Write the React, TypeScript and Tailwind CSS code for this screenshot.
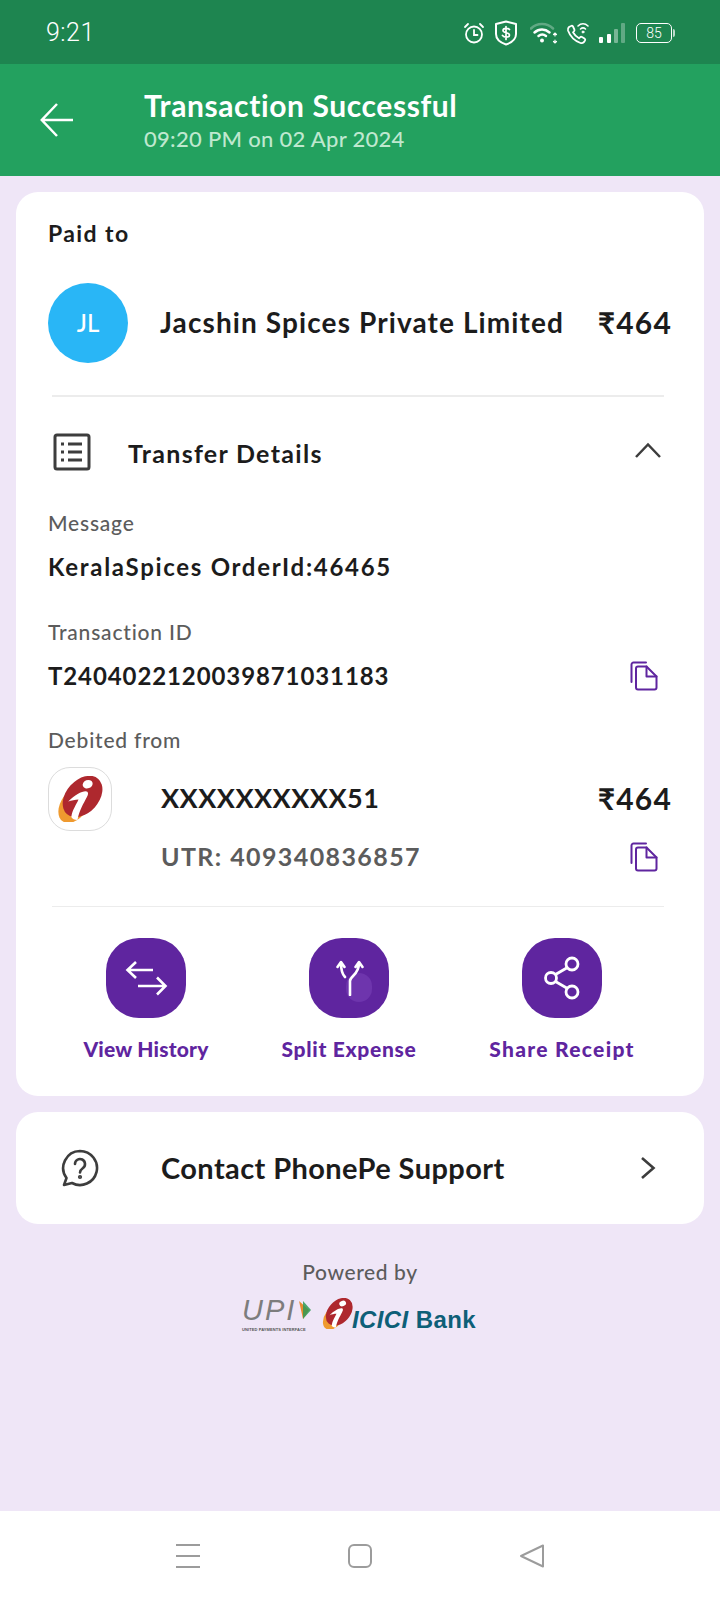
import React from "react";

const font = "font-['Lato','Open_Sans',sans-serif]";

function CopyIcon() {
  return (
    <svg width="28" height="30" viewBox="0 0 28 30" fill="none" stroke="#5f259f" strokeWidth="2" strokeLinejoin="round" strokeLinecap="round">
      <path d="M1.500 21V3.500a2 2 0 0 1 2-2H16" />
      <path d="M6 7.500a2 2 0 0 1 2-2h8.500l10 10V26.500a2 2 0 0 1-2 2H8a2 2 0 0 1-2-2z" fill="#fff" />
      <path d="M16.500 5.500v10h10" />
    </svg>
  );
}

function IciciMark({ size }: { size: number }) {
  return (
    <svg width={size} height={size} viewBox="0 0 45 45">
      <ellipse cx="17" cy="28" rx="20" ry="13" transform="rotate(-55 17 28)" fill="#ef9a2f" />
      <ellipse cx="25" cy="20" rx="23" ry="16" transform="rotate(-48 25 20)" fill="#ae282e" />
      <ellipse cx="30" cy="8" rx="5" ry="4" transform="rotate(-20 30 8)" fill="#fff" />
      <path d="M11 25C17 19 24 15 28 15c3 0 3 3 1 6-3 6-7 12-9 22-3 0-5-1-6-3 1-7 5-12 7-17-3 0-7 1-10 2z" fill="#fff" />
    </svg>
  );
}

function Field({ label, value, copy, className }: { label: string; value: string; copy?: boolean; className: string }) {
  return (
    <>
      <div className={`flex h-[24px] items-center text-[21px] font-medium tracking-[0.8px] text-[#5c5c5c] ${className}`}>{label}</div>
      <div className="mt-[16px] flex h-[32px] items-center justify-between pr-[12px] text-[24px] font-bold tracking-[0.9px] text-[#1c1c1c]">
        <span className={copy ? "" : "tracking-[1.700px]"}>{value}</span>
        {copy && <CopyIcon />}
      </div>
    </>
  );
}

function Action({ label, className, labelClass, children }: { label: string; className: string; labelClass: string; children: React.ReactNode }) {
  return (
    <div className={`flex w-[160px] flex-col items-center ${className}`}>
      <div className="relative flex h-[80px] w-[80px] items-center justify-center overflow-hidden rounded-[33px] bg-[#5f259f]">{children}</div>
      <div className={`mt-[17px] flex h-[28px] items-center whitespace-nowrap text-[21px] font-black text-[#5f259f] ${labelClass}`}>{label}</div>
    </div>
  );
}

export default function App() {
  return (
    <div className={`flex min-h-[1600px] w-[720px] flex-col bg-[#efe6f7] ${font}`}>
      <div className="flex h-[64px] items-center bg-[#1e8550] pl-[46px] pr-[45px] pt-[2px] text-white">
        <span className="font-['Roboto',sans-serif] text-[25px] font-light tracking-[0.5px]">9:21</span>
        <div className="ml-auto flex items-center">
          <svg width="22" height="22" viewBox="0 0 22 22" fill="none" stroke="#fff" strokeWidth="1.800" strokeLinecap="round">
            <circle cx="11" cy="12.500" r="8" />
            <path d="M11 8v5h3.500M2 5l3-3M20 5l-3-3" />
          </svg>
          <svg className="ml-[9px]" width="24" height="26" viewBox="0 0 24 26" fill="none" stroke="#fff" strokeWidth="2">
            <path d="M12 1.500 22 4v10c0 5-4 8.500-10 10.500C6 22.500 2 19 2 14V4z" strokeLinejoin="round" />
            <path d="M15.500 9.500c-1-1.500-6.500-2-6.500 1 0 3 6.500 1.500 6.500 4.500 0 3-5.500 2.500-7 .5M12 6.500v13" strokeWidth="1.700" strokeLinecap="round" />
          </svg>
          <svg className="ml-[12px]" width="28" height="24" viewBox="0 0 28 24" fill="none" strokeLinecap="round">
            <path d="M1 7.500c6-6 16-6 22 0" stroke="#fff" strokeOpacity=".3" strokeWidth="2.500" />
            <path d="M4.500 11.500c4.500-4 10.500-4 15 0M8.500 15c2.500-2 5-2 7.500 0" stroke="#fff" strokeWidth="2.500" />
            <circle cx="12" cy="19.500" r="2" fill="#fff" />
            <path d="M25 13v2M23.500 13.500l1.500-1.500 1.500 1.500M25 19v2M23.500 20.500l1.500 1.500 1.500-1.500" stroke="#fff" strokeWidth="1.200" />
          </svg>
          <svg className="ml-[8px]" width="24" height="24" viewBox="0 0 24 24" fill="none" stroke="#fff" strokeLinecap="round" strokeLinejoin="round">
            <path d="M3 6c-1 1-1.500 2-1 3.500C4 15 9 20 14.500 22c1.500.5 2.500 0 3.500-1l1-1.500c.5-.8.3-1.500-.5-2L16 16c-.7-.4-1.400-.3-2 .3l-1 1c-2.500-1.300-4.500-3.300-6-6l1-1c.6-.6.7-1.300.3-2L7 5.500c-.5-.8-1.200-1-2-.5z" strokeWidth="1.800" />
            <path d="M12 5c3-3 7-3 10 0M14.500 8c1.700-1.500 3.300-1.500 5 0" strokeWidth="1.600" />
            <circle cx="17" cy="11" r="1" fill="#fff" />
          </svg>
          <svg className="ml-[8px]" width="28" height="22" viewBox="0 0 28 22" fill="#fff">
            <rect x="1" y="15" width="4" height="6" rx="1" />
            <rect x="9" y="12" width="4" height="9" rx="1" />
            <rect x="16" y="7" width="4" height="14" rx="1" fillOpacity=".4" />
            <rect x="23" y="1" width="4" height="20" rx="1" fillOpacity=".3" />
          </svg>
          <div className="ml-[10px] flex items-center">
            <div className="flex h-[20px] w-[36px] items-center justify-center rounded-[5px] border-[1.5px] border-white font-['Roboto',sans-serif] text-[14px] font-light leading-none">85</div>
            <div className="ml-px h-[8px] w-[2px] rounded-r-sm bg-white/70" />
          </div>
        </div>
      </div>

      <div className="flex h-[112px] items-center bg-[#23a15f] pl-[40px] text-white">
        <svg width="34" height="36" viewBox="0 0 34 36" fill="none" stroke="#fff" strokeWidth="2.500">
          <path d="M33 18H2M17 2 1.800 18 17 34" />
        </svg>
        <div className="ml-[70px] flex flex-col pt-[4px]">
          <div className="flex h-[34px] items-center text-[30px] font-bold leading-none tracking-[0.6px]">Transaction Successful</div>
          <div className="flex h-[34px] items-center text-[22px] font-medium leading-none tracking-[0.3px] text-[#bfe8cf]">09:20 PM on 02 Apr 2024</div>
        </div>
      </div>

      <div className="mx-[16px] mt-[16px] rounded-[22px] bg-white pb-[33px] pl-[32px] pr-[34px] pt-[27px]">
        <div className="flex h-[28px] items-center text-[23px] font-bold tracking-[1.400px] text-[#1c1c1c]">Paid to</div>
        <div className="mt-[36px] flex h-[80px] items-center">
          <div className="flex h-[80px] w-[80px] items-center justify-center rounded-full bg-[#29b6f6] text-[24px] font-medium text-white">JL</div>
          <span className="mb-[2px] ml-[32px] text-[28px] font-bold tracking-[1.100px] text-[#1c1c1c]">Jacshin Spices Private Limited</span>
          <span className="-mr-[2px] mb-[2px] ml-auto font-['Lato','Noto_Sans',sans-serif] text-[30px] font-bold tracking-[1.200px] text-[#1c1c1c]">₹464</span>
        </div>
        <div className="ml-[4px] mr-[6px] mt-[32px] h-[1.500px] bg-[#ececec]" />
        <div className="mt-[32px] flex h-[46px] items-center">
          <svg className="ml-[5px]" width="38" height="38" viewBox="0 0 38 38" fill="none" stroke="#3d3d3d" strokeWidth="3">
            <rect x="2" y="2" width="34" height="34" rx="2" />
            <path d="M15 11h14M15 19h14M15 27h14M8 11h3M8 19h3M8 27h3" />
          </svg>
          <span className="ml-[37px] pt-[4px] text-[25px] font-bold tracking-[1.300px] text-[#1c1c1c]">Transfer Details</span>
          <svg className="mb-[4px] ml-auto mr-[8px]" width="28" height="16" viewBox="0 0 28 16" fill="none" stroke="#3d3d3d" strokeWidth="2.500">
            <path d="M2 15 14 2.500 26 15" />
          </svg>
        </div>
        <Field label="Message" value="KeralaSpices OrderId:46465" className="mt-[36px]" />
        <Field label="Transaction ID" value="T2404022120039871031183" copy className="mt-[37px]" />
        <div className="mt-[36px] flex h-[24px] items-center text-[21px] font-medium tracking-[0.8px] text-[#5c5c5c]">Debited from</div>
        <div className="mt-[15px] flex">
          <div className="flex h-[64px] w-[64px] shrink-0 items-center justify-center rounded-[22px] border border-[#dcdcdc] bg-white">
            <IciciMark size={46} />
          </div>
          <div className="ml-[49px] flex-1">
            <div className="flex h-[64px] items-center justify-between text-[27px] font-bold tracking-[0.500px] text-[#1c1c1c]">
              <span>XXXXXXXXXX51</span>
              <span className="-mr-[2px] font-['Lato','Noto_Sans',sans-serif] text-[30px] tracking-[1.200px]">₹464</span>
            </div>
            <div className="mt-[10px] flex h-[32px] items-center justify-between pr-[12px] text-[25px] font-bold tracking-[1.400px] text-[#5c5c5c]">
              <span>UTR: 409340836857</span>
              <CopyIcon />
            </div>
          </div>
        </div>
        <div className="ml-[4px] mr-[6px] mt-[33px] h-[1.500px] bg-[#ececec]" />
        <div className="mt-[31px] flex">
          <Action label="View History" className="ml-[18px]" labelClass="tracking-[0.2px]">
            <svg width="44" height="36" viewBox="0 0 44 36" fill="none" stroke="#fff" strokeWidth="2.600">
              <path d="M29 10H4M12 2 3.500 10 12 18M14 26h27M33 17.500l8.500 8.500-8.500 8.500" />
            </svg>
          </Action>
          <Action label="Split Expense" className="ml-[43px]" labelClass="tracking-[0.7px]">
            <div className="absolute left-[37px] top-[35px] h-[29px] w-[26px] rounded-full bg-[#6e35ad]" />
            <svg className="relative ml-[4px]" width="30" height="36" viewBox="0 0 30 36" fill="none" stroke="#fff" strokeWidth="2.600" strokeLinecap="round" strokeLinejoin="round">
              <path d="M14 35V21c0-5 9-6 9-18M9 17c-3-3-4-8-4-14M1.500 7 5 2l3.500 5M19.500 7 23 2l3.500 5" />
            </svg>
          </Action>
          <Action label="Share Receipt" className="ml-[53px]" labelClass="tracking-[1.300px]">
            <svg width="36" height="44" viewBox="0 0 36 44" fill="none" stroke="#fff" strokeWidth="2.800">
              <circle cx="28" cy="8" r="6" />
              <circle cx="28" cy="36" r="6" />
              <circle cx="7" cy="22" r="5.500" />
              <path d="M11.500 18.500 23.500 11.500M11.500 25.500 23.500 32.500" />
            </svg>
          </Action>
        </div>
      </div>

      <div className="mx-[16px] mt-[16px] flex h-[112px] items-center rounded-[22px] bg-white pl-[45px] pr-[48px]">
        <svg width="38" height="38" viewBox="0 0 38 38" fill="none" stroke="#3d3d3d" strokeWidth="2.600" strokeLinecap="round" strokeLinejoin="round">
          <path d="M19 2a17 17 0 1 1-8 32l-8 2 2.500-7A17 17 0 0 1 19 2z" />
          <path d="M14 15a5 5 0 1 1 8 4c-2 1.500-3 2.500-3 4.500" />
          <circle cx="19" cy="28" r="0.800" fill="#3d3d3d" />
        </svg>
        <span className="ml-[62px] text-[29px] font-bold tracking-[0.400px] text-[#1c1c1c]">Contact PhonePe Support</span>
        <svg className="ml-auto" width="16" height="24" viewBox="0 0 16 24" fill="none" stroke="#3d3d3d" strokeWidth="2.600">
          <path d="M2 2 13.500 12 2 22" />
        </svg>
      </div>

      <div className="mt-[34px] flex h-[28px] items-center justify-center text-[21px] font-medium tracking-[0.6px] text-[#5c5c5c]">Powered by</div>
      <div className="mt-[6px] flex h-[42px] items-center pl-[242px]">
        <div className="flex w-[72px] shrink-0 flex-col">
          <div className="flex h-[34px] items-center">
            <span className="font-['Liberation_Sans',sans-serif] text-[29px] italic leading-[34px] tracking-[2px] text-[#7d7d7d]">UPI</span>
            <svg className="ml-[1px]" width="15" height="20" viewBox="0 0 15 20">
              <path d="M2 1l10 9-6 9z" fill="#e98a2f" />
              <path d="M6 1l8 9-8 9z" fill="#2f9a55" opacity=".85" />
            </svg>
          </div>
          <div className="whitespace-nowrap font-['Liberation_Sans',sans-serif] text-[4px] font-bold leading-[6px] tracking-[0.1px] text-[#555]">UNITED PAYMENTS INTERFACE</div>
        </div>
        <div className="ml-[8px]"><IciciMark size={31} /></div>
        <span className="ml-[-1px] self-end whitespace-nowrap font-['Liberation_Sans',sans-serif] text-[24px] font-bold leading-[28px] tracking-[0.4px] text-[#0e5f78]">
          <span className="italic">ICICI</span> <span>Bank</span>
        </span>
      </div>

      <div className="mt-auto flex h-[89px] items-center bg-white">
        <div className="ml-[176px] flex h-[24px] w-[24px] flex-col justify-between">
          <div className="h-[2px] bg-[#9c9c9c]" />
          <div className="h-[2px] bg-[#9c9c9c]" />
          <div className="h-[2px] bg-[#9c9c9c]" />
        </div>
        <div className="ml-[148px] h-[24px] w-[24px] rounded-[6px] border-2 border-[#9c9c9c]" />
        <svg className="ml-[148px]" width="24" height="24" viewBox="0 0 24 24" fill="none" stroke="#9c9c9c" strokeWidth="2" strokeLinejoin="round">
          <path d="M23 1.500V22.500L1 12z" />
        </svg>
      </div>
    </div>
  );
}
